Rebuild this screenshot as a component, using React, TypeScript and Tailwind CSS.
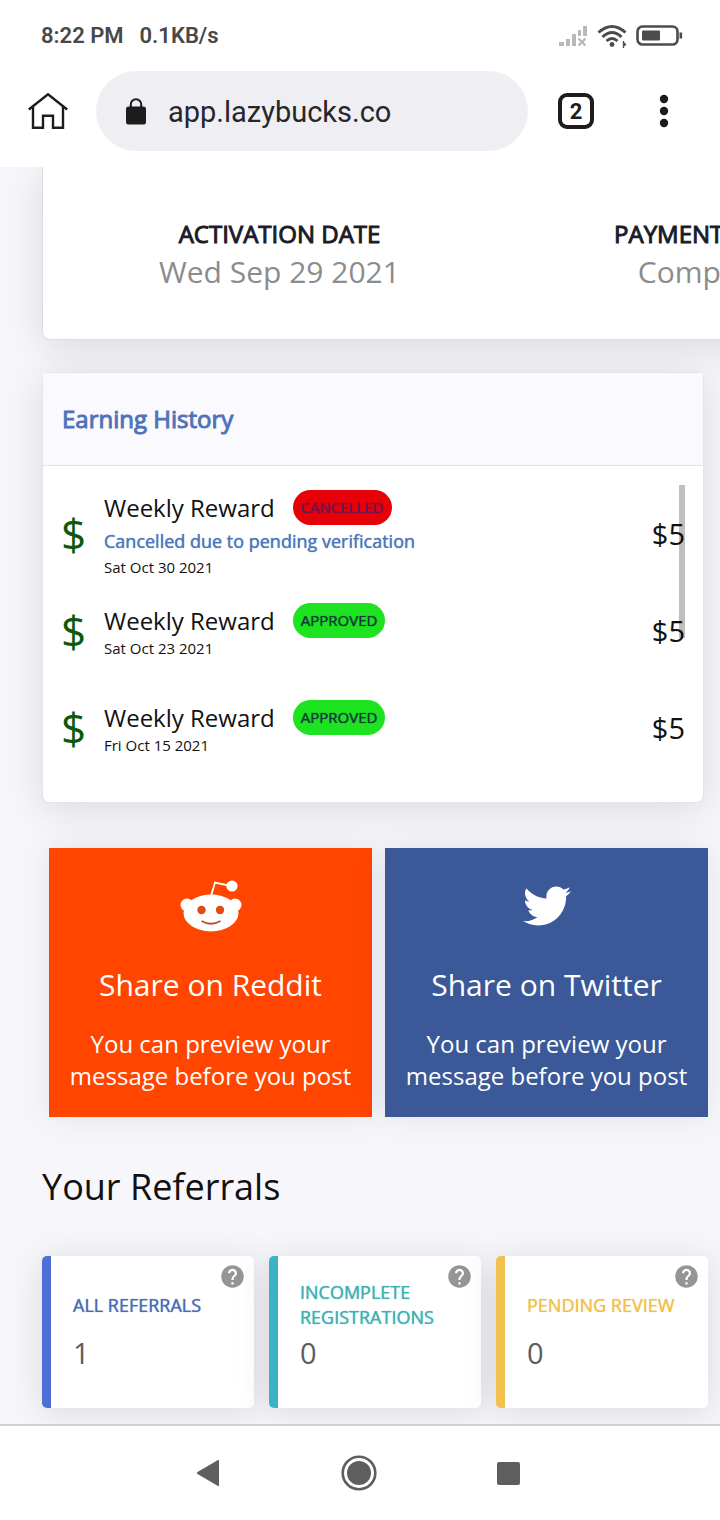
import { FaTwitter } from "react-icons/fa";
import { MdHelp } from "react-icons/md";

interface Earning {
  title: string;
  status: "CANCELLED" | "APPROVED";
  note?: string;
  date: string;
  amount: string;
}

const EARNINGS: Earning[] = [
  {
    title: "Weekly Reward",
    status: "CANCELLED",
    note: "Cancelled due to pending verification",
    date: "Sat Oct 30 2021",
    amount: "$5",
  },
  {
    title: "Weekly Reward",
    status: "APPROVED",
    date: "Sat Oct 23 2021",
    amount: "$5",
  },
  {
    title: "Weekly Reward",
    status: "APPROVED",
    date: "Fri Oct 15 2021",
    amount: "$5",
  },
];

const DETAILS = [
  { label: "ACTIVATION DATE", value: "Wed Sep 29 2021" },
  { label: "PAYMENT STATUS", value: "Completed" },
];

const REFERRALS = [
  {
    label: "ALL REFERRALS",
    count: 1,
    border: "border-[#4e6fd6]",
    text: "text-[#4a6cb8]",
  },
  {
    label: "INCOMPLETE REGISTRATIONS",
    count: 0,
    border: "border-[#3bb3c4]",
    text: "text-[#3fb0b4]",
  },
  {
    label: "PENDING REVIEW",
    count: 0,
    border: "border-[#f2c14e]",
    text: "text-[#efc14c]",
  },
];

const StatusBar = () => (
  <div className="flex h-[71px] items-center justify-between pl-[41px] pr-[37px] text-[22px] font-semibold text-[#484848]">
    <div className="flex gap-4">
      <span>8:22 PM</span>
      <span>0.1KB/s</span>
    </div>
    <div className="flex items-center gap-2">
      <svg width="30" height="24" viewBox="0 0 30 24" fill="#b9b9b9">
        <rect x="0" y="18" width="5" height="4" />
        <rect x="7" y="15" width="4" height="7" />
        <rect x="13" y="10" width="4" height="12" />
        <rect x="19" y="6" width="3" height="6" />
        <rect x="24" y="2" width="4" height="10" />
        <path d="M19.5 14.5l7 7M26.5 14.5l-7 7" stroke="#b9b9b9" strokeWidth="2.4" />
      </svg>
      <svg width="30" height="24" viewBox="0 0 30 24" fill="none" stroke="#4c4c4c" strokeWidth="3">
        <path d="M1.5 8.5Q15-3.5 28.5 8.5" />
        <path d="M5.5 13Q15 4 24.5 13" />
        <path d="M9.5 17Q15 12 20.5 17" />
        <circle cx="15" cy="20.5" r="2.4" fill="#4c4c4c" stroke="none" />
        <path d="M26.5 17v7M26 18l2.5 2.5-2.5 2" strokeWidth="1.3" />
      </svg>
      <svg width="48" height="24" viewBox="0 0 48 24">
        <rect x="2.5" y="2.5" width="40" height="18" rx="5" fill="none" stroke="#4c4c4c" strokeWidth="2.6" />
        <rect x="7" y="6.5" width="18" height="10" rx="1" fill="#4c4c4c" />
        <rect x="44.5" y="8.5" width="2.6" height="6" fill="#4c4c4c" />
      </svg>
    </div>
  </div>
);

const BrowserBar = () => (
  <div className="flex h-24 items-start pb-4 pl-7 pr-[38px]">
    <button type="button" aria-label="Home" className="flex h-20 items-center">
      <svg width="40" height="40" viewBox="0 0 40 40" fill="none" stroke="#1d1d1d" strokeWidth="2.4">
        <path d="M.8 18.5L20 3.2 39.2 18.5" />
        <path d="M5 15.5V36.8H15V24.8H25V36.8H35V15.5" />
      </svg>
    </button>
    <div className="ml-7 flex h-20 min-w-0 flex-1 items-center rounded-full bg-[#efeff3] pl-[30px] pr-6">
      <svg width="20" height="27" viewBox="0 0 20 27" className="shrink-0">
        <path d="M4.8 10V6.5a5.2 5.2 0 0 1 10.4 0V10" fill="none" stroke="#1d1d1d" strokeWidth="2" />
        <rect y="8.5" width="20" height="18" rx="2.5" fill="#1d1d1d" />
      </svg>
      <input
        type="text"
        aria-label="Address"
        defaultValue="app.lazybucks.co"
        className="ml-[22px] min-w-0 flex-1 bg-transparent pt-1 text-[29px] text-[#26262b] outline-none"
      />
    </div>
    <div className="ml-[30px] flex h-20 items-center gap-[52px]">
      <button
        type="button"
        aria-label="Tabs"
        className="flex size-9 items-center justify-center rounded-[9px] border-4 border-[#1d1d1d] text-[22px] font-bold text-[#1d1d1d]"
      >
        2
      </button>
      <button type="button" aria-label="Menu" className="flex w-9 justify-center">
        <svg width="10" height="34" viewBox="0 0 10 34" fill="#1d1d1d">
          <circle cx="5" cy="5" r="4.2" />
          <circle cx="5" cy="17" r="4.2" />
          <circle cx="5" cy="29" r="4.2" />
        </svg>
      </button>
    </div>
  </div>
);

const EarningRow = ({ item }: { item: Earning }) => (
  <li className="flex h-[97px] items-center">
    <span className="w-[43px] shrink-0 text-[44px] leading-none text-[#0b5a0b]">$</span>
    <div className="min-w-0 flex-1">
      <div className="flex items-center gap-[18px]">
        <span className="text-2xl">{item.title}</span>
        <span
          className={
            item.status === "APPROVED"
              ? "rounded-full bg-[#1de321] px-2 text-[15px] leading-[35px] text-[#123a3a] [text-shadow:0_0_1px_currentColor]"
              : "rounded-full bg-[#e60008] px-2 text-[15px] leading-[35px] text-[#6b1450] [text-shadow:0_0_1px_currentColor]"
          }
        >
          {item.status}
        </span>
      </div>
      {item.note && (
        <p className="text-lg leading-8 text-[#4f76b8] [text-shadow:0_0_1px_currentColor]">
          {item.note}
        </p>
      )}
      <p className="text-[15px] leading-5">{item.date}</p>
    </div>
    <span className="text-[29px]">{item.amount}</span>
  </li>
);

const RedditLogo = () => (
  <svg width="62" height="54" viewBox="0 0 62 54" fill="#fff">
    <path d="M31 17L35 3.5 51 7" fill="none" stroke="#fff" strokeWidth="1.8" />
    <circle cx="52" cy="7" r="5.6" />
    <circle cx="7" cy="26" r="6.5" />
    <circle cx="55" cy="26" r="6.5" />
    <ellipse cx="31" cy="34" rx="27.5" ry="18.5" />
    <circle cx="21.5" cy="31" r="4.2" fill="#e04a14" />
    <circle cx="40" cy="31" r="4.2" fill="#e04a14" />
    <path d="M21.5 42Q31 47.5 40.5 42" fill="none" stroke="#b8502a" strokeWidth="1.8" />
  </svg>
);

export default function App() {
  return (
    <div className="flex min-h-screen flex-col overflow-hidden bg-white font-['Open_Sans',sans-serif] text-[#111]">
      <header className="bg-white font-['Roboto',sans-serif]">
        <StatusBar />
        <BrowserBar />
      </header>

      <main className="flex-1 overflow-hidden bg-[#f7f7fb] pb-4 pl-[42px] pr-3">
        {/* wider than the screen, the second column runs off the right edge */}
        <section className="flex h-[173px] w-[910px] rounded-b-lg border border-t-0 border-[#dedee2] bg-white px-[19px] pt-[52px] shadow-[0_6px_40px_rgba(0,0,0,0.12)]">
          {DETAILS.map((item) => (
            <div key={item.label} className="flex-1 text-center">
              <h3 className="text-2xl leading-[30px] text-[#1b1b28] [-webkit-text-stroke:1px]">
                {item.label}
              </h3>
              <p className="text-[30px] leading-[46px] text-[#8c8c8c]">{item.value}</p>
            </div>
          ))}
        </section>

        <section className="mr-1 mt-8 rounded-lg border border-[#e4e4e8] bg-white shadow-[0_6px_40px_rgba(0,0,0,0.12)]">
          <h2 className="border-b border-[#e3e4ea] bg-[#f9f9fe] px-[19px] text-2xl leading-[92px] text-[#4f73b8] [-webkit-text-stroke:1px]">
            Earning History
          </h2>
          <div className="relative mx-[18px] mb-[18px] mt-[19px]">
            <ul className="pb-2">
              {EARNINGS.map((item) => (
                <EarningRow key={item.date} item={item} />
              ))}
            </ul>
            <div className="absolute right-0 top-0 h-[153px] w-[6px] bg-black/25" />
          </div>
        </section>

        <section className="mt-[45px] grid grid-cols-2 gap-[13px] pl-[7px] text-center text-white">
          <a
            href="#reddit"
            className="flex h-[269px] flex-col items-center bg-[#ff4500] px-4 pt-[31px] shadow-[0_0_30px_rgba(60,80,100,0.12)]"
          >
            <RedditLogo />
            <h3 className="mt-7 text-[30px] leading-[48px]">Share on Reddit</h3>
            <p className="mt-[19px] text-2xl">You can preview your message before you post</p>
          </a>
          <a
            href="#twitter"
            className="flex h-[269px] flex-col items-center bg-[#3b5998] px-4 pt-[31px] shadow-[0_0_30px_rgba(60,80,100,0.12)]"
          >
            <span className="flex h-[54px] items-center">
              <FaTwitter size={48} />
            </span>
            <h3 className="mt-7 text-[30px] leading-[48px]">Share on Twitter</h3>
            <p className="mt-[19px] text-2xl">You can preview your message before you post</p>
          </a>
        </section>

        <h2 className="mt-[45px] text-[36px] leading-[50px]">Your Referrals</h2>

        <section className="mt-11 grid grid-cols-3 gap-[15px]">
          {REFERRALS.map((item) => (
            <div
              key={item.label}
              className={`relative flex h-[152px] flex-col rounded-[5px] border-l-[9px] bg-white pl-[22px] pr-6 pt-[23px] shadow-[0_4px_36px_rgba(0,0,0,0.12)] ${item.border}`}
            >
              <div className="flex h-[52px] items-center">
                <h3 className={`text-lg leading-[25px] [text-shadow:0_0_1px_currentColor] ${item.text}`}>
                  {item.label}
                </h3>
              </div>
              <p className="text-[29px] leading-[44px] text-[#5c5c5f]">{item.count}</p>
              <MdHelp size={27} className="absolute right-2 top-[7px] text-[#959595]" />
            </div>
          ))}
        </section>
      </main>

      <nav className="flex h-24 items-center justify-center border-t-2 border-[#cfcfd2] bg-white pr-1 text-[#5e5e5e]">
        <div className="flex w-[324px] items-center justify-between">
          <button type="button" aria-label="Back">
            <svg width="24" height="28" viewBox="0 0 24 28" fill="currentColor">
              <path d="M23 1.5V26.5Q23 27.5 22 27L1.5 15Q0 14 1.5 13L22 1Q23 .5 23 1.5Z" />
            </svg>
          </button>
          <button type="button" aria-label="Home screen">
            <svg width="36" height="36" viewBox="0 0 36 36">
              <circle cx="18" cy="18" r="16.3" fill="none" stroke="currentColor" strokeWidth="2.6" />
              <circle cx="18" cy="18" r="12" fill="currentColor" />
            </svg>
          </button>
          <button type="button" aria-label="Recent apps" className="size-[23px] rounded-[2px] bg-[#5e5e5e]" />
        </div>
      </nav>
    </div>
  );
}
